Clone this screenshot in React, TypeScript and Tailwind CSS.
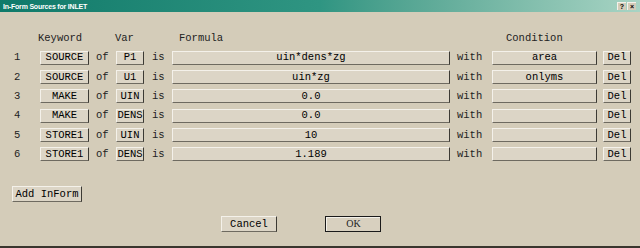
import React from 'react';

type Row = {
  n: number;
  keyword: string;
  variable: string;
  formula: string;
  condition: string;
};

const rows: Row[] = [
  { n: 1, keyword: 'SOURCE', variable: 'P1', formula: 'uin*dens*zg', condition: 'area' },
  { n: 2, keyword: 'SOURCE', variable: 'U1', formula: 'uin*zg', condition: 'onlyms' },
  { n: 3, keyword: 'MAKE', variable: 'UIN', formula: '0.0', condition: '' },
  { n: 4, keyword: 'MAKE', variable: 'DENS', formula: '0.0', condition: '' },
  { n: 5, keyword: 'STORE1', variable: 'UIN', formula: '10', condition: '' },
  { n: 6, keyword: 'STORE1', variable: 'DENS', formula: '1.189', condition: '' },
];

const raised =
  'h-[14px] flex items-center justify-center bg-[#dcd5c6] border-t border-l border-t-[#f4f1ea] border-l-[#f4f1ea] border-r border-b border-r-[#3c3a34] border-b-[#6e6a60] text-black';

function TitleBar() {
  return (
    <div className="h-[12px] flex items-center justify-between bg-gradient-to-r from-[#0e7a6a] via-[#2f9582] to-[#a8d4c4] px-[3px]">
      <span className="text-[7px] font-bold text-white tracking-[-0.2px] font-['Liberation_Sans',sans-serif] leading-none">
        In-Form Sources for INLET
      </span>
      <div className="flex gap-[1px] pr-[1px]">
        <div className="w-[9px] h-[8px] bg-[#d4ccb9] border-t border-l border-[#f4f1ea] border-r-[#303030] border-b-[#303030] flex items-center justify-center text-[7px] font-bold leading-none text-black font-['Liberation_Sans',sans-serif]">
          ?
        </div>
        <div className="w-[9px] h-[8px] bg-[#d4ccb9] border-t border-l border-[#f4f1ea] border-r-[#303030] border-b-[#303030] flex items-center justify-center text-[7px] font-bold leading-none text-black font-['Liberation_Sans',sans-serif]">
          ×
        </div>
      </div>
    </div>
  );
}

function InFormRow({ row }: { row: Row }) {
  return (
    <div className="h-[19.3px] flex items-center">
      <div className="w-[28px] pl-[2px]">{row.n}</div>
      <div className={`${raised} w-[49px]`}>{row.keyword}</div>
      <div className="w-[27px] pl-[7px]">of</div>
      <div className={`${raised} w-[28px]`}>{row.variable}</div>
      <div className="w-[28px] pl-[8px]">is</div>
      <div className={`${raised} w-[278px] bg-[#d8d0bf]`}>{row.formula}</div>
      <div className="w-[42px] pl-[7px]">with</div>
      <div className={`${raised} w-[105px] bg-[#d8d0bf]`}>{row.condition}</div>
      <div className="w-[6px]" />
      <div className={`${raised} w-[28px]`}>Del</div>
    </div>
  );
}

export default function App() {
  return (
    <div className="w-[640px] h-[248px] bg-[#d4ccb9] flex flex-col font-['Liberation_Mono',monospace] text-[10.5px] leading-none text-[#222] border-b-2 border-b-[#3a362e]">
      <TitleBar />
      <div className="pl-[12px] pt-[20px]">
        <div className="h-[12px] flex items-center">
          <div className="w-[26px]" />
          <div className="w-[77px]">Keyword</div>
          <div className="w-[64px]">Var</div>
          <div className="w-[327px]">Formula</div>
          <div>Condition</div>
        </div>
        <div className="pt-[4px] flex flex-col">
          {rows.map((r) => (
            <InFormRow key={r.n} row={r} />
          ))}
        </div>
        <div className="pt-[22px]">
          <div className={`${raised} h-[16px] w-[70px]`}>Add InForm</div>
        </div>
        <div className="pt-[14px] flex pl-[209px] gap-[48px]">
          <div className={`${raised} h-[16px] w-[56px]`}>Cancel</div>
          <div className="h-[16px] w-[56px] border border-[#1a1a1a] flex">
            <div className="flex-1 flex items-center justify-center bg-[#d8d0bf] border-t border-l border-[#f4f1ea] border-r-[#5a564c] border-b-[#5a564c] font-['Liberation_Serif',serif] text-[10px]">
              OK
            </div>
          </div>
        </div>
      </div>
    </div>
  );
}
